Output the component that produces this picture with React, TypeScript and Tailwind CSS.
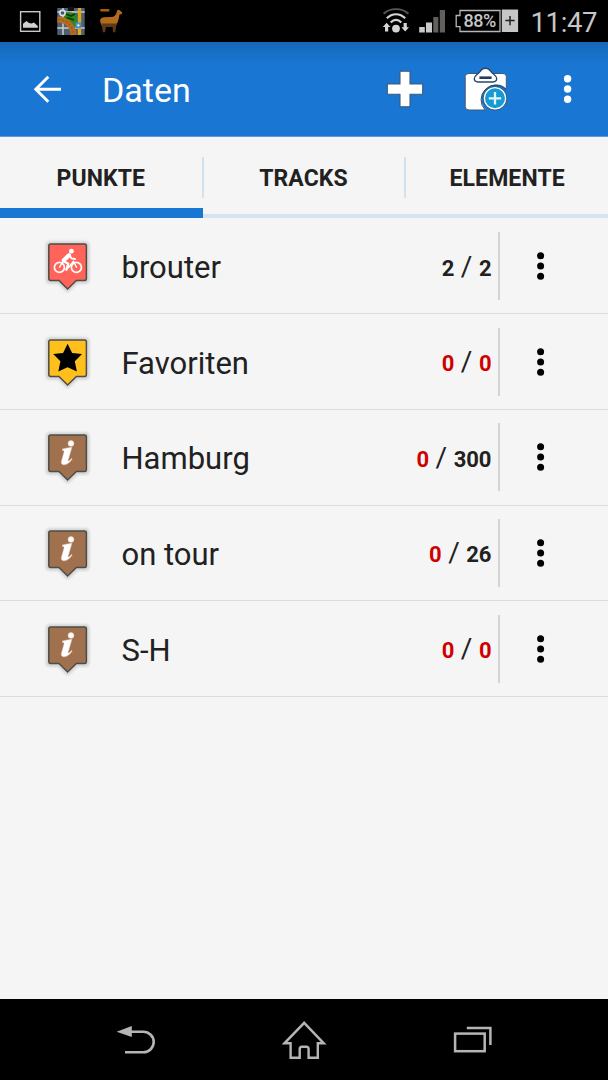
import type { ReactNode } from 'react';

type Marker = 'bike' | 'star' | 'info';

interface Folder {
  name: string;
  visible: number;
  total: number;
  marker: Marker;
}

const folders: Folder[] = [
  { name: 'brouter', visible: 2, total: 2, marker: 'bike' },
  { name: 'Favoriten', visible: 0, total: 0, marker: 'star' },
  { name: 'Hamburg', visible: 0, total: 300, marker: 'info' },
  { name: 'on tour', visible: 0, total: 26, marker: 'info' },
  { name: 'S-H', visible: 0, total: 0, marker: 'info' },
];

const tabs = ['PUNKTE', 'TRACKS', 'ELEMENTE'];

const markerColors: Record<Marker, string> = {
  bike: '#ff6359',
  star: '#ffc01e',
  info: '#a0714f',
};

const markerGlyphs: Record<Marker, ReactNode> = {
  bike: (
    <g fill="none" stroke="#fff" strokeLinecap="round" strokeLinejoin="round">
      <circle cx="16.4" cy="30.4" r="5" strokeWidth="1.7" />
      <circle cx="33.4" cy="30.4" r="5" strokeWidth="1.7" />
      <circle cx="28.4" cy="14.2" r="2.4" fill="#fff" stroke="none" />
      <path d="M26 18.2 L20.8 23.2" strokeWidth="4.2" />
      <path d="M21 24.5 L25.3 26.8 L23.4 32.7" strokeWidth="2.4" />
      <path d="M26.5 18.2 L28.6 21.4 L32 22" strokeWidth="1.8" />
      <path d="M16.6 30.2 L19.5 25.2" strokeWidth="1.4" />
      <path d="M25.5 30.7 L30.5 24.2 L33.4 30.2" strokeWidth="1.4" />
    </g>
  ),
  star: (
    <path
      d="M24.6 10.8 L29.1 20 L39 21 L31.8 28.3 L33.9 38.6 L24.6 34.2 L15.3 38.6 L17.4 28.3 L10.2 21 L20.1 20 Z"
      fill="#000"
    />
  ),
  info: (
    <g fill="#fff" stroke="#f2c9b8" strokeWidth="0.5">
      <circle cx="28" cy="15.4" r="2.9" />
      <path d="M19.6 20.9 C22.6 20.3 25.6 19.7 28.9 19.2 L25.2 32 C24.7 33.8 26.2 33.2 28.4 30.4 L29.2 31.1 C26.2 35.6 23.2 37.1 20.5 36.7 C18 36.3 18.1 34.3 18.7 32.2 L20.9 24.4 C21.4 22.6 20.8 22.4 19.4 22.4 Z" />
    </g>
  ),
};

function MarkerIcon({ type }: { type: Marker }) {
  return (
    <svg width="50" height="58" viewBox="0 0 50 58" className="shrink-0">
      <path
        d="M7.2 6.5 H42 Q44.3 6.5 44.3 8.8 V42 Q44.3 44.5 42 44.5 H33.5 L24.6 52.8 L16 44.5 H7.2 Q5 44.5 5 42 V8.8 Q5 6.5 7.2 6.5 Z"
        fill="#d6d6d6"
        stroke="#d3d3d3"
        strokeWidth="4.6"
        strokeLinejoin="round"
        className="blur-[1px]"
      />
      <path
        d="M7.6 7 H41.6 Q43.4 7 43.4 8.8 V41.6 Q43.4 43.4 41.6 43.4 H33.4 L24.6 52 L16 43.4 H7.6 Q5.8 43.4 5.8 41.6 V8.8 Q5.8 7 7.6 7 Z"
        fill={markerColors[type]}
        stroke="#4c4c48"
        strokeWidth="1.5"
      />
      {markerGlyphs[type]}
    </svg>
  );
}

function DotsIcon({ radius }: { radius: number }) {
  return (
    <svg width="10" height="30" viewBox="0 0 10 30" fill="currentColor" className="shrink-0">
      <circle cx="4.6" cy="4.8" r={radius} />
      <circle cx="4.6" cy="15" r={radius} />
      <circle cx="4.6" cy="25.2" r={radius} />
    </svg>
  );
}

function StatusBar() {
  return (
    <div className="flex h-[42px] shrink-0 items-center bg-black pl-[19px] pr-[11px] text-[#c6c6c6]">
      <svg width="23" height="42" viewBox="0 0 23 42">
        <rect x="1.6" y="11.7" width="19.2" height="19.6" fill="none" stroke="#c9c9c9" strokeWidth="1.4" />
        <path d="M4 27.7 V23.8 L7.5 20.9 L10 23 L12.5 23.5 L15 22.5 L18.8 26 V27.7 Z" fill="#d2d2d2" />
      </svg>

      {/* map tile */}
      <svg width="30" height="42" viewBox="0 0 30 42" className="ml-[14px]">
        <rect x="1.3" y="8" width="27.4" height="27" fill="#4c5f73" />
        <path d="M1.3 12 H28.7 M1.3 28 H28.7 M7 8 V35 M17 8 V35" stroke="#c9d0cf" strokeWidth="1.5" />
        <path d="M12 7 H18 V11 H12 Z" fill="#111" />
        <path d="M23.5 8 V35" stroke="#dca821" strokeWidth="3.4" />
        <path d="M8 14 L11 12 L20 13 L21 20 L18 29 L13 23 L8.5 20 Z" fill="#2c8b17" />
        <path d="M10 14 L15 16 L19 14 M10.5 17.5 L18 20" stroke="#12360b" strokeWidth="1.8" fill="none" />
        <path d="M1.3 19.5 C10 19.5 17 25 17.5 35" fill="none" stroke="#b46a1f" strokeWidth="5.8" />
        <path d="M2 19.5 C10 19.5 17 25 17.5 35" fill="none" stroke="#7d4a17" strokeWidth="0.8" strokeDasharray="2 2" />
        <circle cx="6.5" cy="13" r="2.6" fill="#3d5478" stroke="#dadfe2" strokeWidth="1.6" />
        <rect x="19.5" y="22.5" width="5.5" height="5.5" fill="#4090ce" />
        <path d="M20.8 25.3 H23.8 M22.3 23.8 V26.8" stroke="#dff0f5" strokeWidth="1" />
      </svg>

      {/* llama */}
      <svg width="26" height="42" viewBox="0 0 26 42" className="ml-[13px]">
        <rect x="1.3" y="9" width="9" height="2.4" rx="0.6" fill="#a95e0d" />
        <path
          d="M1 20 Q2 17.3 5 17.3 L11 17 Q14 17.5 16 15.5 Q18 13 18.2 10.3 L20 9.8 L23.3 12.5 L22.8 14 L20.5 14.5 C20 18 19.5 21 17.5 24.5 L16.5 27 L3.5 27 L1.8 24 Z"
          fill="#b36a1b"
        />
        <path d="M2 23.5 H18 L17.2 25.5 L16.3 32.2 H14 L13.6 27 H7 L6 32.2 H3.8 L3 26 Z" fill="#5c3a18" />
      </svg>

      <div className="ml-auto flex items-center">
        <svg width="28" height="42" viewBox="0 0 28 42" fill="none">
          <path d="M1.6 13.8 C8 7.5 20 7.5 26.4 13.8" stroke="#585858" strokeWidth="1.9" />
          <path d="M4.8 18.3 C10 12.8 18 12.8 23.2 18.3" stroke="#d5d5d5" strokeWidth="2.1" />
          <path d="M8.7 22.5 C12 19 16 19 19.3 22.5" stroke="#d5d5d5" strokeWidth="2.1" />
          <circle cx="14" cy="28.6" r="3.9" fill="#d5d5d5" />
          <path d="M4.6 22.8 L8.4 27 H6.2 V31.4 H3 V27 H0.8 Z M23.2 31.6 L27 27.3 H24.8 V23 H21.6 V27.3 H19.4 Z" fill="#d5d5d5" />
        </svg>
        <svg width="28" height="42" viewBox="0 0 28 42" className="ml-[8px]">
          <path d="M1.2 27 H6.8 V32.5 H1.2 Z M8 22.5 H14 V32.5 H8 Z" fill="#cacaca" />
          <path d="M15.3 17 H20.3 V32.5 H15.3 Z M21.8 10 H27 V32.5 H21.8 Z" fill="#625f5d" />
        </svg>

        <div className="relative ml-[8px] h-[42px] w-[66px]">
          <svg width="66" height="42" viewBox="0 0 66 42">
            <path d="M6 10.5 H46 V31.5 H6 V26.7 H2.2 V15.5 H6 Z" fill="none" stroke="#b6b6b6" strokeWidth="1.3" />
            <rect x="47.8" y="9.5" width="16.3" height="22.5" fill="#c6c6c6" />
            <path d="M51.3 20.6 H60.7 M56 16 V25.2" stroke="#222" strokeWidth="1.5" />
          </svg>
          <span className="absolute left-[9.5px] top-[11px] text-[18px] font-medium leading-[20px] tracking-[-0.5px]">88%</span>
        </div>
        <span className="ml-[10.5px] pt-[3px] text-[27.5px] leading-[39px] tracking-[-0.4px]">11:47</span>
      </div>
    </div>
  );
}

function AppBar() {
  return (
    <header className="flex h-[95px] shrink-0 items-center border-b border-[#5c9bdd] bg-[linear-gradient(#1768b9,#1976d3_22px)] pl-[33px] pr-[35.5px] text-white">
      <svg width="30" height="30" viewBox="0 0 30 30" fill="none" stroke="currentColor" strokeWidth="2.9">
        <path d="M28 15.3 H3.5 M15.3 2.8 L2.8 15.3 L15.3 27.8" />
      </svg>
      <h1 className="ml-[39px] pt-[2px] text-[34px] leading-[40px]">Daten</h1>

      <div className="ml-auto flex items-center">
        <svg width="38" height="38" viewBox="0 0 38 38">
          <path
            d="M14 1.3 H24 V14 H36.7 V24.2 H24 V36.8 H14 V24.2 H1.3 V14 H14 Z"
            fill="#fff"
            stroke="#405973"
            strokeWidth="1.1"
            strokeLinejoin="round"
          />
        </svg>
        <svg width="46" height="46" viewBox="0 0 46 46" className="ml-[40px]">
          <path
            d="M5 7.5 H39 Q42.3 7.5 42.3 10.5 V41 Q42.3 44 39 44 H5 Q1.2 44 1.2 40.5 V10.5 Q1.2 7.5 5 7.5 Z"
            fill="#fff"
            stroke="#405973"
            strokeWidth="1"
          />
          <path
            d="M10.3 12.6 C10.3 9 14.7 8 16.6 4.8 Q18.2 2.2 21.5 2.2 Q24.8 2.2 26.4 4.8 C28.3 8 32.7 9 32.7 12.6 Q32.7 16 29 16 H14 Q10.3 16 10.3 12.6 Z"
            fill="#fff"
            stroke="#294865"
            strokeWidth="1.4"
          />
          <path d="M15.4 11.7 H27.6" stroke="#213f60" strokeWidth="2.6" />
          <path d="M21.5 46 V43.2 A14.2 14.2 0 0 1 42.9 23 H46 V46 Z" fill="#1976d3" />
          <path d="M21.2 44 A14 14 0 0 1 42.3 23.6" fill="none" stroke="#294865" strokeWidth="1" />
          <circle cx="31" cy="32.3" r="10.8" fill="#159bd4" stroke="#fff" strokeWidth="1.6" />
          <circle cx="31" cy="32.3" r="11.8" fill="none" stroke="#294865" strokeWidth="0.8" />
          <path d="M24.8 32.3 H37.2 M31 26.1 V38.5" stroke="#e4f4fb" strokeWidth="2.3" />
        </svg>
        <div className="ml-[52.5px]">
          <DotsIcon radius={3.7} />
        </div>
      </div>
    </header>
  );
}

function Tabs() {
  return (
    <nav className="grid h-[81px] shrink-0 grid-cols-3 text-[23px] font-bold text-[#212121]">
      {tabs.map((tab, i) => (
        <div
          key={tab}
          className={`flex flex-col ${i === 0 ? 'border-b-[10px] border-[#1976d3]' : 'border-b-[4px] border-[#d6e3ef]'}`}
        >
          <div
            className={`mt-[20px] -mr-px flex h-[41px] items-center justify-center ${
              i < 2 ? 'border-r-2 border-[#d3e1ee]' : ''
            }`}
          >
            <span className="pt-[3px] tracking-[0.1px]">{tab}</span>
          </div>
        </div>
      ))}
    </nav>
  );
}

function Count({ value }: { value: number }) {
  return <span className={`text-[22px] font-bold ${value === 0 ? 'text-[#d00000]' : ''}`}>{value}</span>;
}

function FolderRow({ folder }: { folder: Folder }) {
  return (
    <li className="flex h-[95.67px] items-center border-b border-[#dcdcdc] pl-[43px] text-[#212121]">
      <MarkerIcon type={folder.marker} />
      <span className="ml-[28.5px] flex-1 pt-[4px] text-[31px] leading-[36px]">{folder.name}</span>
      <div className="flex items-baseline pt-[3px] leading-[36px]">
        <Count value={folder.visible} />
        <span className="mx-[6.5px] text-[28px]">/</span>
        <Count value={folder.total} />
      </div>
      <div className="ml-[6.5px] h-[68px] w-[2px] bg-[#d4d4d4]" />
      <div className="ml-[35.5px] mr-[62.5px] text-black">
        <DotsIcon radius={3.5} />
      </div>
    </li>
  );
}

function NavigationBar() {
  return (
    <footer className="flex h-[81px] shrink-0 items-center bg-black pl-[115px] pr-[114px] text-[#b5b5b5]">
      <svg width="42" height="81" viewBox="0 0 42 81" fill="none" stroke="currentColor" strokeWidth="2.6">
        <path d="M16 32.8 H28.5 A10.2 10.2 0 0 1 28.5 53.2 H10" />
        <path d="M1.6 32.7 L16.8 27 V38 Z" fill="currentColor" stroke="none" />
      </svg>
      <svg width="46" height="81" viewBox="1 0 46 81" fill="none" stroke="currentColor" strokeWidth="2.4" className="mx-auto">
        <path d="M23.2 23.8 L42.8 44.3 H36.8 V58.8 H27.6 V50 Q27.6 47.7 25.3 47.7 H21 Q18.7 47.7 18.7 50 V58.8 H9.6 V44.3 H3.4 Z" />
      </svg>
      <svg width="42" height="81" viewBox="0 0 42 81" fill="none" stroke="currentColor" strokeWidth="2.5">
        <rect x="3.1" y="34.6" width="29.6" height="17.6" />
        <path d="M14.8 29 H38.4 V46" />
      </svg>
    </footer>
  );
}

export default function App() {
  return (
    <div className="flex h-[1080px] w-[608px] flex-col overflow-hidden bg-[#f5f5f5] font-['Roboto',sans-serif]">
      <StatusBar />
      <AppBar />
      <Tabs />
      <ul className="flex-1 pt-[0.7px]">
        {folders.map((folder) => (
          <FolderRow key={folder.name} folder={folder} />
        ))}
      </ul>
      <NavigationBar />
    </div>
  );
}
